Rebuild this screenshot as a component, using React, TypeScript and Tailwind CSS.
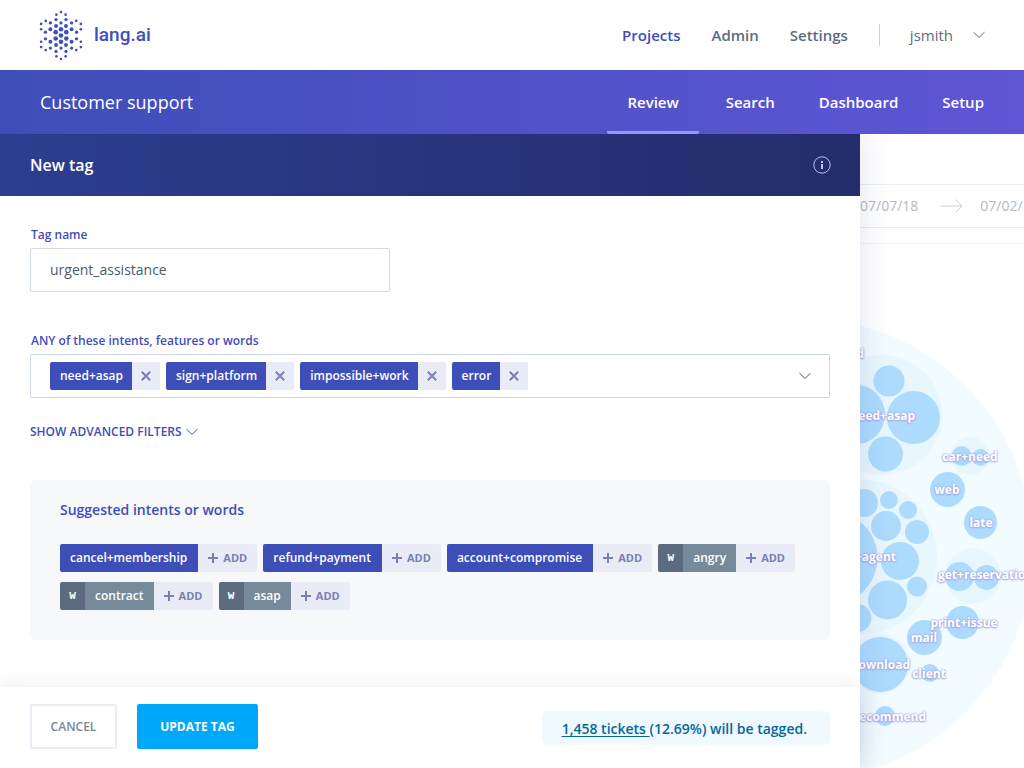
import React from 'react';

type Bubble = [cx: number, cy: number, r: number];

const LOGO_DOTS: Bubble[] = [
  [94, 34, 4], [80, 42, 4], [108, 42, 4], [79, 57, 5], [109, 57, 5],
  [48, 61, 4], [140, 61, 4], [62, 67, 5], [126, 67, 5], [94, 67, 5],
  [34, 70, 4], [154, 70, 4], [79, 76, 6], [109, 76, 6], [94, 86, 7],
  [62, 86, 6], [126, 86, 6], [47, 95, 5], [141, 95, 5], [78, 95, 7], [110, 95, 7],
  [34, 86, 4], [154, 86, 4], [94, 105, 7],
  [78, 114, 7], [110, 114, 7], [47, 115, 5], [141, 115, 5], [34, 124, 4], [154, 124, 4],
  [62, 124, 6], [126, 124, 6], [94, 124, 7], [79, 134, 6], [109, 134, 6], [94, 143, 5],
  [34, 140, 4], [154, 140, 4], [62, 143, 5], [126, 143, 5], [48, 149, 4], [140, 149, 4],
  [79, 153, 5], [109, 153, 5], [80, 168, 4], [108, 168, 4], [94, 176, 4],
];

const GROUPS: Bubble[] = [
  [882, 415, 60], [970, 456, 19], [859, 557, 78], [973, 576, 28], [880, 664, 30],
];

const BUBBLES: Bubble[] = [
  [889, 381, 15.5], [913.5, 417.5, 26.5], [885.5, 454, 17.5], [855, 414.5, 30],
  [961.5, 456, 10], [980.5, 457.5, 8.5], [947.5, 489.5, 17.5], [980.5, 522.5, 16.5],
  [864, 503, 14], [889, 500, 9], [908, 510, 9], [886, 526, 15], [917, 532, 12],
  [831, 558, 46.5], [900, 561, 19], [917, 586.5, 10], [887.5, 600, 19.5], [857, 618, 14.3],
  [959.5, 576.5, 14.5], [986.5, 577.5, 12.5], [962.5, 622.5, 16.5], [924.5, 637.5, 17.5],
  [880.5, 664.5, 27.5], [930, 673, 9], [885, 716, 10],
];

const BUBBLE_LABELS: { text: string; x: number; y: number; anchor: 'end' | 'middle' | 'start' }[] = [
  { text: 'need', x: 864, y: 358, anchor: 'end' },
  { text: 'need+asap', x: 915, y: 420, anchor: 'end' },
  { text: 'car+need', x: 970, y: 461, anchor: 'middle' },
  { text: 'web', x: 947, y: 494, anchor: 'middle' },
  { text: 'late', x: 981, y: 527, anchor: 'middle' },
  { text: 'talk+agent', x: 896, y: 561, anchor: 'end' },
  { text: 'get+reservation', x: 938, y: 579, anchor: 'start' },
  { text: 'print+issue', x: 964, y: 627, anchor: 'middle' },
  { text: 'mail', x: 924, y: 642, anchor: 'middle' },
  { text: 'download', x: 910, y: 669, anchor: 'end' },
  { text: 'client', x: 929, y: 678, anchor: 'middle' },
  { text: 'recommend', x: 926, y: 721, anchor: 'end' },
];

const SELECTED = ['need+asap', 'sign+platform', 'impossible+work', 'error'];

const SUGGESTED = [
  { text: 'cancel+membership', word: false },
  { text: 'refund+payment', word: false },
  { text: 'account+compromise', word: false },
  { text: 'angry', word: true },
  { text: 'contract', word: true },
  { text: 'asap', word: true },
];

function Chevron({ className }: { className: string }) {
  return (
    <svg viewBox="0 0 12 8" className={className} fill="none" stroke="currentColor" strokeWidth="1" aria-hidden="true">
      <path d="M.8 1.500 6 6.400l5.200-4.900" strokeLinecap="round" strokeLinejoin="round" />
    </svg>
  );
}

function Logo() {
  return (
    <a href="#" className="flex items-center gap-[11px] text-[#4050b8]">
      <svg viewBox="28 28 132 154" className="h-[51px] w-11" fill="currentColor" aria-hidden="true">
        {LOGO_DOTS.map(([cx, cy, r]) => (
          <circle key={`${cx}-${cy}`} cx={cx} cy={cy} r={r} />
        ))}
      </svg>
      <span className="font-[Roboto,sans-serif] text-[19px] leading-6 font-medium">lang.ai</span>
    </a>
  );
}

function SelectedChip({ text }: { text: string }) {
  return (
    <span className="flex h-7 text-xs font-semibold">
      <span className="flex items-center rounded-l-xs bg-[#3e4eb8] pr-[9px] pl-[10px] text-white">{text}</span>
      <button type="button" aria-label={`Remove ${text}`} className="flex w-7 items-center justify-center rounded-r-xs bg-[#e9ebf7] text-[#7a80b0]">
        <svg viewBox="0 0 10 10" className="size-[10px]" stroke="currentColor" strokeWidth="2" aria-hidden="true">
          <path d="M.8.8 9.200 9.200M9.200.8.8 9.200" />
        </svg>
      </button>
    </span>
  );
}

function SuggestedChip({ text, word }: { text: string; word: boolean }) {
  return (
    <li className="flex h-7 text-xs font-semibold text-white">
      {word && (
        <span className="flex w-[25px] items-center justify-center rounded-l-xs bg-[#5c6b7f] font-[Liberation_Mono,monospace] text-[11px] font-bold">W</span>
      )}
      <span className={word ? 'flex items-center bg-[#768a9a] px-[10px]' : 'flex items-center rounded-l-xs bg-[#3e4eb8] pr-[11px] pl-[10px]'}>{text}</span>
      <button type="button" aria-label={`Add ${text}`} className="flex w-[59px] items-center justify-center gap-[5px] rounded-r-xs bg-[#e9ebf7] text-[11px] font-bold text-[#7a80b0]">
        <svg viewBox="0 0 10 10" className="size-[10px]" stroke="currentColor" strokeWidth="2" aria-hidden="true">
          <path d="M5 0v10M0 5h10" />
        </svg>
        ADD
      </button>
    </li>
  );
}

function BubbleMap() {
  return (
    <svg viewBox="860 244 164 524" className="block h-[524px] w-[164px]" role="img" aria-label="Intent map">
      <circle cx="802" cy="549" r="231" fill="#f2fbff" />
      {GROUPS.map(([cx, cy, r]) => (
        <circle key={`${cx}-${cy}`} cx={cx} cy={cy} r={r} fill="#e8f6fe" />
      ))}
      {BUBBLES.map(([cx, cy, r]) => (
        <circle key={`${cx}-${cy}`} cx={cx} cy={cy} r={r} fill="#addbfe" />
      ))}
      {BUBBLE_LABELS.map(({ text, x, y, anchor }) => (
        <text
          key={`${text}-${y}`}
          x={x}
          y={y}
          textAnchor={anchor}
          className="fill-white text-xs font-bold [text-shadow:0_0_2px_#a9a5e0,0_0_2px_#a9a5e0,0_1px_2px_#a9a5e0]"
        >
          {text}
        </text>
      ))}
    </svg>
  );
}

export default function App() {
  return (
    <div className="flex min-h-screen flex-col overflow-x-hidden bg-white font-['Open_Sans','Noto_Sans',sans-serif]">
      <header className="z-20 flex h-[70px] items-center justify-between bg-white pr-[39px] pl-[39px]">
        <Logo />
        <nav className="flex items-center text-[15px] font-semibold text-[#5c6b7f]">
          <div className="flex gap-[31px]">
            <a href="#" className="text-[#3e4eb8]">Projects</a>
            <a href="#">Admin</a>
            <a href="#">Settings</a>
          </div>
          <button type="button" className="ml-[31px] flex h-[22px] items-center gap-5 border-l border-[#c5d0da] pl-[30px] font-normal">
            jsmith
            <Chevron className="h-2 w-3" />
          </button>
        </nav>
      </header>

      <div className="z-20 flex h-16 items-center justify-between bg-linear-to-r from-[#3e4eb8] to-[#5f55d6] pr-5 pl-10 text-white">
        <h1 className="text-lg font-normal">Customer support</h1>
        <nav className="flex h-full gap-1 text-[15px] font-semibold">
          <a href="#" className="mr-[3px] flex items-center rounded-xs border-y-3 border-t-transparent border-b-[#8c9bff] px-5">Review</a>
          <a href="#" className="flex items-center px-5">Search</a>
          <a href="#" className="flex items-center px-5">Dashboard</a>
          <a href="#" className="flex items-center px-5">Setup</a>
        </nav>
      </div>

      <main className="flex flex-1">
        <section className="z-10 flex min-w-0 flex-1 flex-col bg-white shadow-[0_0_30px_rgba(50,60,130,0.15)]">
          <div className="flex h-[62px] items-center justify-between bg-linear-to-r from-[#2c3e8f] to-[#242c6c] pr-[29px] pl-[30px] text-white">
            <h2 className="text-base font-semibold">New tag</h2>
            <button type="button" aria-label="About tags" className="text-[#bcc2ee]">
              <svg viewBox="0 0 18 18" className="size-[18px]" fill="none" stroke="currentColor" aria-hidden="true">
                <circle cx="9" cy="9" r="8.200" />
                <path d="M9 8v5M9 5v2" strokeWidth="2" strokeDasharray="5 5" />
              </svg>
            </button>
          </div>

          <form id="tag-form" className="flex-1 px-[30px] pt-[30px] pb-[46px]">
            <label htmlFor="tag-name" className="block pl-px text-xs leading-[18px] font-semibold text-[#3e4eb8]">Tag name</label>
            <input
              id="tag-name"
              defaultValue="urgent_assistance"
              className="mt-1 block h-11 w-[360px] rounded-xs border border-[#d0d8ec] px-[19px] pb-[2px] text-sm text-[#4d5a68] outline-none"
            />

            <label htmlFor="intents" className="mt-10 block pl-px text-xs leading-[18px] font-semibold text-[#3e4eb8]">
              ANY of these intents, features or words
            </label>
            <div className="mt-1 flex h-11 items-center gap-[6px] rounded-xs border border-[#d0d8ec] pr-[18px] pl-[19px]">
              {SELECTED.map((text) => (
                <SelectedChip key={text} text={text} />
              ))}
              <input id="intents" className="h-8 min-w-0 flex-1 outline-none" />
              <button type="button" aria-label="Show options" className="text-[#4d5a68]">
                <Chevron className="h-2 w-3" />
              </button>
            </div>

            <button type="button" className="mt-6 flex items-center gap-1 text-xs leading-5 font-semibold text-[#3e4eb8]">
              SHOW ADVANCED FILTERS
              <Chevron className="h-2 w-3" />
            </button>

            <section className="mt-[38px] rounded-md bg-[#f7f8fa] px-[30px] py-5">
              <h3 className="text-sm font-semibold text-[#3e4eb8]">Suggested intents or words</h3>
              <ul className="mt-6 mb-[10px] flex flex-wrap gap-x-[6px] gap-y-[10px]">
                {SUGGESTED.map((item) => (
                  <SuggestedChip key={item.text} {...item} />
                ))}
              </ul>
            </section>
          </form>

          <footer className="flex h-[81px] items-start justify-between bg-white px-[30px] pt-[17px] shadow-[0_0_20px_rgba(50,60,100,0.1)]">
            <div className="flex gap-5 text-xs font-semibold">
              <button type="button" className="h-[45px] w-[87px] rounded-xs border-2 border-[#e9ebf7] text-[#768a9a]">CANCEL</button>
              <button type="submit" form="tag-form" className="h-[45px] w-[121px] rounded-xs bg-[#00a8f9] font-bold text-white">UPDATE TAG</button>
            </div>
            <p className="mt-[7px] rounded-md bg-[#f0f9ff] pt-2 pr-[23px] pb-[6px] pl-5 text-sm font-semibold text-[#04689b]">
              <a href="#" className="underline underline-offset-2">1,458 tickets </a>(12.69%) will be tagged.
            </p>
          </footer>
        </section>

        <aside className="w-[164px] shrink-0 overflow-hidden">
          <div className="h-[51px] border-b border-[#e9ebf5]" />
          <div className="flex h-[43px] items-center border-b border-[#e9ebf5] text-sm whitespace-nowrap text-[#b5bac0]">
            <time>07/07/18</time>
            <svg viewBox="0 0 22 14" className="mr-[17px] ml-[22px] h-[14px] w-[23px] shrink-0" fill="none" stroke="#c9ced6" aria-hidden="true">
              <path d="M0 7h21M15 .5 21.500 7 15 13.500" />
            </svg>
            <time>07/02/18</time>
          </div>
          <div className="h-4 border-b border-[#f2f3f8]" />
          <BubbleMap />
        </aside>
      </main>
    </div>
  );
}
